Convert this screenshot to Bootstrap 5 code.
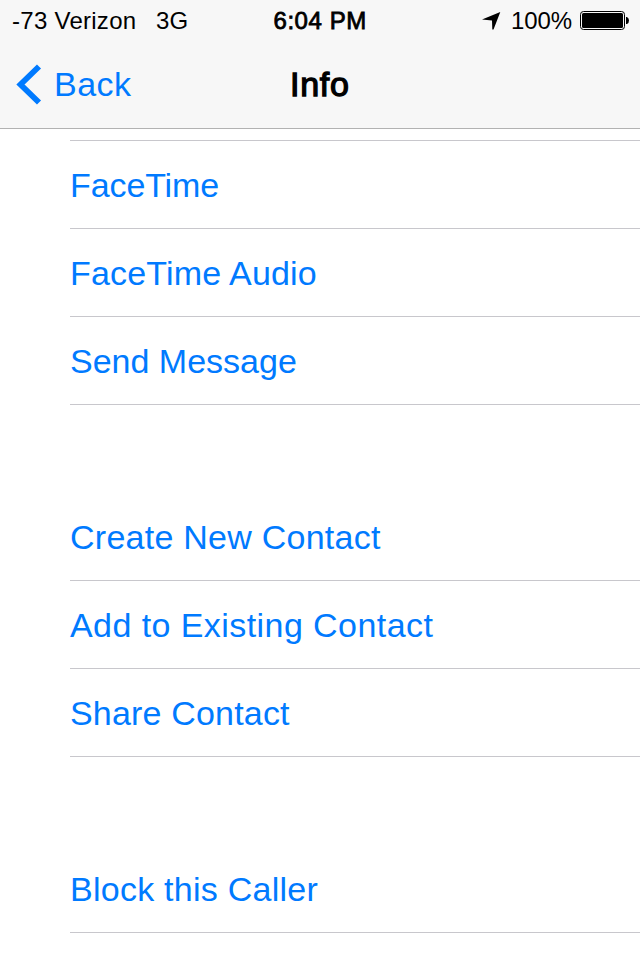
<!DOCTYPE html>
<html lang="en">
<head>
<meta charset="utf-8">
<meta name="viewport" content="width=device-width, initial-scale=1">
<title>Info</title>
<link href="https://cdn.jsdelivr.net/npm/bootstrap@5.3.0/dist/css/bootstrap.min.css" rel="stylesheet">
<style>
body{font-family:"Liberation Sans",Arial,sans-serif;width:640px;height:960px;overflow:hidden;color:#000}
.topbar{height:129px;background:#f7f7f7;border-bottom:1px solid #b2b2b2}
.status-row{height:40px;padding:0 10px 0 12px;font-size:24px;line-height:41px;white-space:nowrap}
.carrier{width:144px;letter-spacing:.27px}
.network{width:117.5px;letter-spacing:.2px}
.clock{width:207.5px;letter-spacing:.55px;-webkit-text-stroke:.8px #000}
.level{width:69px;letter-spacing:-.1px}
.title-row{height:88px;font-size:34px;line-height:89px}
.back{width:290px;padding-left:15px;color:#007aff;letter-spacing:.45px}
.heading{font-size:34px;line-height:89px;letter-spacing:.75px;-webkit-text-stroke:1.3px #000}
.actions{padding-left:70px;font-size:34px}
.actions .list-group-item{height:88px;padding:1px 0 0;line-height:87px;border:0;border-bottom:1px solid #c8c7cc;background:#fff;color:#007aff;white-space:nowrap}
.first{border-top:1px solid #c8c7cc;margin-top:11px}
.spaced{margin-top:88px}
.tight{letter-spacing:-.1px}
.ls-a{letter-spacing:.18px}
.ls-b{letter-spacing:.25px}
.ls-c{letter-spacing:.43px}
</style>
</head>
<body class="bg-white">
<header class="topbar">
  <div class="status-row d-flex">
    <span class="carrier">-73 Verizon</span>
    <span class="network">3G</span>
    <span class="clock">6:04 PM</span>
    <svg width="30" height="40"><path d="M1 19.500 19.300 12 12.500 29.500 11.300 29.500 11 20.500Z"/></svg>
    <span class="level">100%</span>
    <svg width="49" height="40"><rect x=".5" y="11.500" width="44" height="18" rx="3" fill="none" stroke="#000"/><rect x="2" y="13" width="41" height="15" rx="1.500"/><path d="M46 17h1q2 1 2 3.500t-2 3.500h-1z"/></svg>
  </div>
  <nav class="title-row d-flex">
    <a class="back d-flex text-decoration-none" href="#"><svg width="39" height="88"><path d="M24 26.500 5.500 44.500 24 62.500" fill="none" stroke="#007aff" stroke-width="5.800"/></svg><span>Back</span></a>
    <h1 class="heading fw-normal m-0">Info</h1>
  </nav>
</header>
<main class="actions">
  <div class="list-group rounded-0 first">
    <a href="#" class="list-group-item tight">FaceTime</a>
    <a href="#" class="list-group-item ls-a">FaceTime Audio</a>
    <a href="#" class="list-group-item">Send Message</a>
  </div>
  <div class="list-group rounded-0 spaced">
    <a href="#" class="list-group-item ls-b">Create New Contact</a>
    <a href="#" class="list-group-item ls-c">Add to Existing Contact</a>
    <a href="#" class="list-group-item ls-a">Share Contact</a>
  </div>
  <div class="list-group rounded-0 spaced">
    <a href="#" class="list-group-item ls-b">Block this Caller</a>
  </div>
</main>
<script src="https://cdn.jsdelivr.net/npm/bootstrap@5.3.0/dist/js/bootstrap.bundle.min.js"></script>
</body>
</html>
